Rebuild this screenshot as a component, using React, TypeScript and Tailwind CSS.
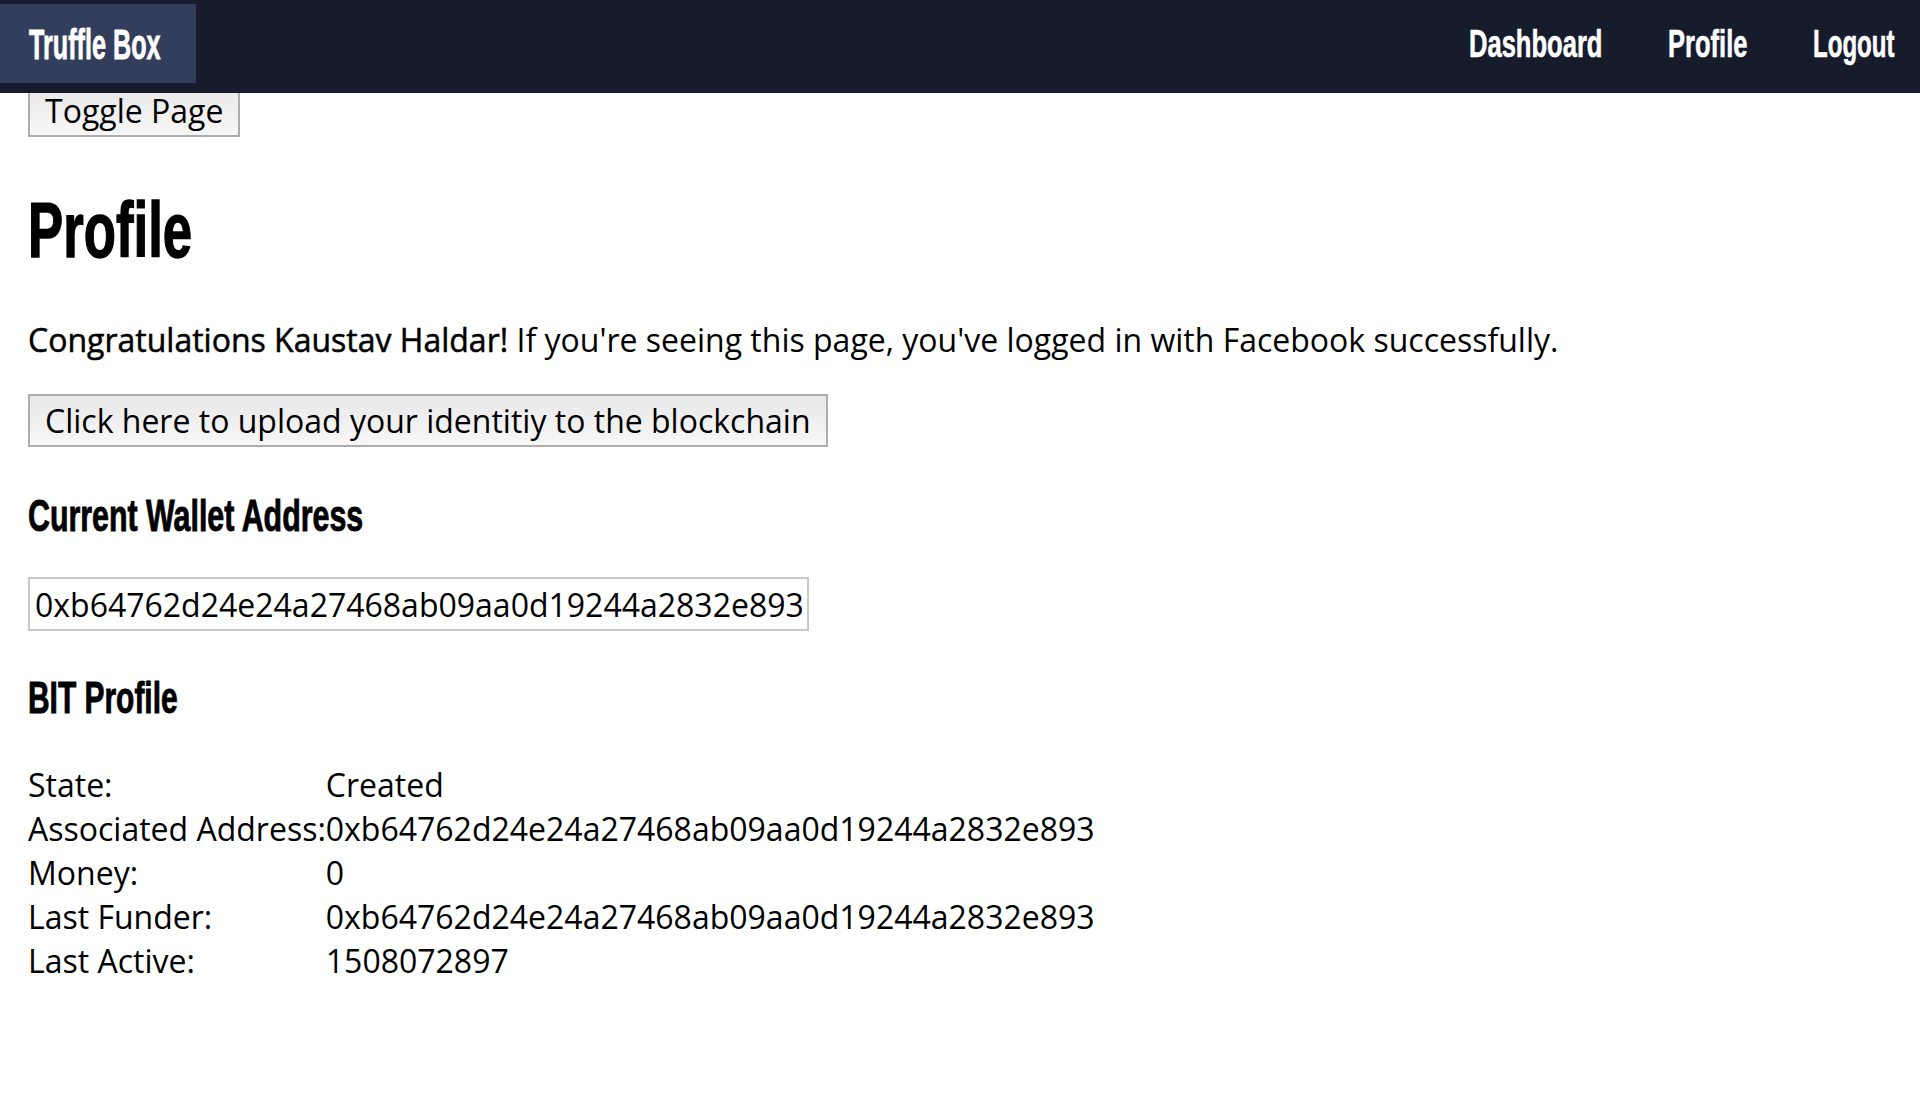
import React from "react";

const ADDRESS = "0xb64762d24e24a27468ab09aa0d19244a2832e893";

const rows: [string, string][] = [
  ["State:", "Created"],
  ["Associated Address:", ADDRESS],
  ["Money:", "0"],
  ["Last Funder:", ADDRESS],
  ["Last Active:", "1508072897"],
];

export default function App() {
  return (
    <div className="min-h-screen bg-white text-black font-['Open_Sans',sans-serif] text-[32px] leading-[44px]">
      {/* Navbar (fixed, overlays content) */}
      <nav className="fixed top-0 inset-x-0 z-10 h-[93px] bg-[#161c2c] flex items-start pt-[4px] text-white font-['Liberation_Sans',Arial,sans-serif] font-bold">
        <div className="h-[79px] w-[196px] bg-[#323e5c] flex items-center pl-[29px] pt-[2px]">
          <span className="inline-block whitespace-nowrap origin-left scale-x-[0.6] text-[42px] leading-[42px] [-webkit-text-stroke:0.8px_white]">
            Truffle Box
          </span>
        </div>
        <div className="ml-auto h-[79px] flex items-center gap-[65px] pr-[25px] pt-[4px]">
          <a className="w-[134px] block cursor-pointer">
            <span className="inline-block whitespace-nowrap origin-left scale-x-[0.655] text-[39px] leading-[39px] [-webkit-text-stroke:0.6px_white]">
              Dashboard
            </span>
          </a>
          <a className="w-[80px] block cursor-pointer">
            <span className="inline-block whitespace-nowrap origin-left scale-x-[0.655] text-[39px] leading-[39px] [-webkit-text-stroke:0.6px_white]">
              Profile
            </span>
          </a>
          <a className="w-[82px] block cursor-pointer">
            <span className="inline-block whitespace-nowrap origin-left scale-x-[0.617] text-[39px] leading-[39px] [-webkit-text-stroke:0.6px_white]">
              Logout
            </span>
          </a>
        </div>
      </nav>

      {/* Main content */}
      <main className="pt-[84px] pl-[28px] pb-[40px]">
        <button className="h-[53px] px-[15px] border-2 border-[#adadad] bg-linear-to-b from-[#e8e8e8] to-[#f7f7f7] leading-[44px] whitespace-nowrap">
          Toggle Page
        </button>

        <h1 className="mt-[55px] h-[77px] font-['Liberation_Sans',Arial,sans-serif] font-bold text-[77px] leading-[77px]">
          <span className="inline-block whitespace-nowrap origin-left scale-x-[0.685] [-webkit-text-stroke:1.4px_black]">Profile</span>
        </h1>

        <p className="mt-[49px] whitespace-nowrap">
          <strong className="font-normal [-webkit-text-stroke:0.5px_black]">Congratulations Kaustav Haldar!</strong>{" "}
          If you're seeing this page, you've logged in with Facebook successfully.
        </p>

        <button className="mt-[32px] h-[53px] px-[15px] border-2 border-[#adadad] bg-linear-to-b from-[#e8e8e8] to-[#f7f7f7] leading-[44px] whitespace-nowrap">
          Click here to upload your identitiy to the blockchain
        </button>

        <h3 className="mt-[47px] h-[44px] font-['Liberation_Sans',Arial,sans-serif] font-bold text-[44px] leading-[44px]">
          <span className="inline-block whitespace-nowrap origin-left scale-x-[0.69] [-webkit-text-stroke:0.9px_black]">Current Wallet Address</span>
        </h3>

        <input
          readOnly
          value={ADDRESS}
          className="block mt-[39px] w-[781px] h-[54px] border-2 border-[#c9c9c9] px-[5px] bg-white outline-none text-[32px]"
        />

        <h3 className="mt-[45px] h-[44px] font-['Liberation_Sans',Arial,sans-serif] font-bold text-[44px] leading-[44px]">
          <span className="inline-block whitespace-nowrap origin-left scale-x-[0.68] [-webkit-text-stroke:0.9px_black]">BIT Profile</span>
        </h3>

        <table className="mt-[43px] border-collapse">
          <tbody>
            {rows.map(([label, value]) => (
              <tr key={label}>
                <td className="p-0 leading-[44px] whitespace-nowrap align-top">{label}</td>
                <td className="p-0 leading-[44px] whitespace-nowrap align-top">{value}</td>
              </tr>
            ))}
          </tbody>
        </table>
      </main>
    </div>
  );
}
